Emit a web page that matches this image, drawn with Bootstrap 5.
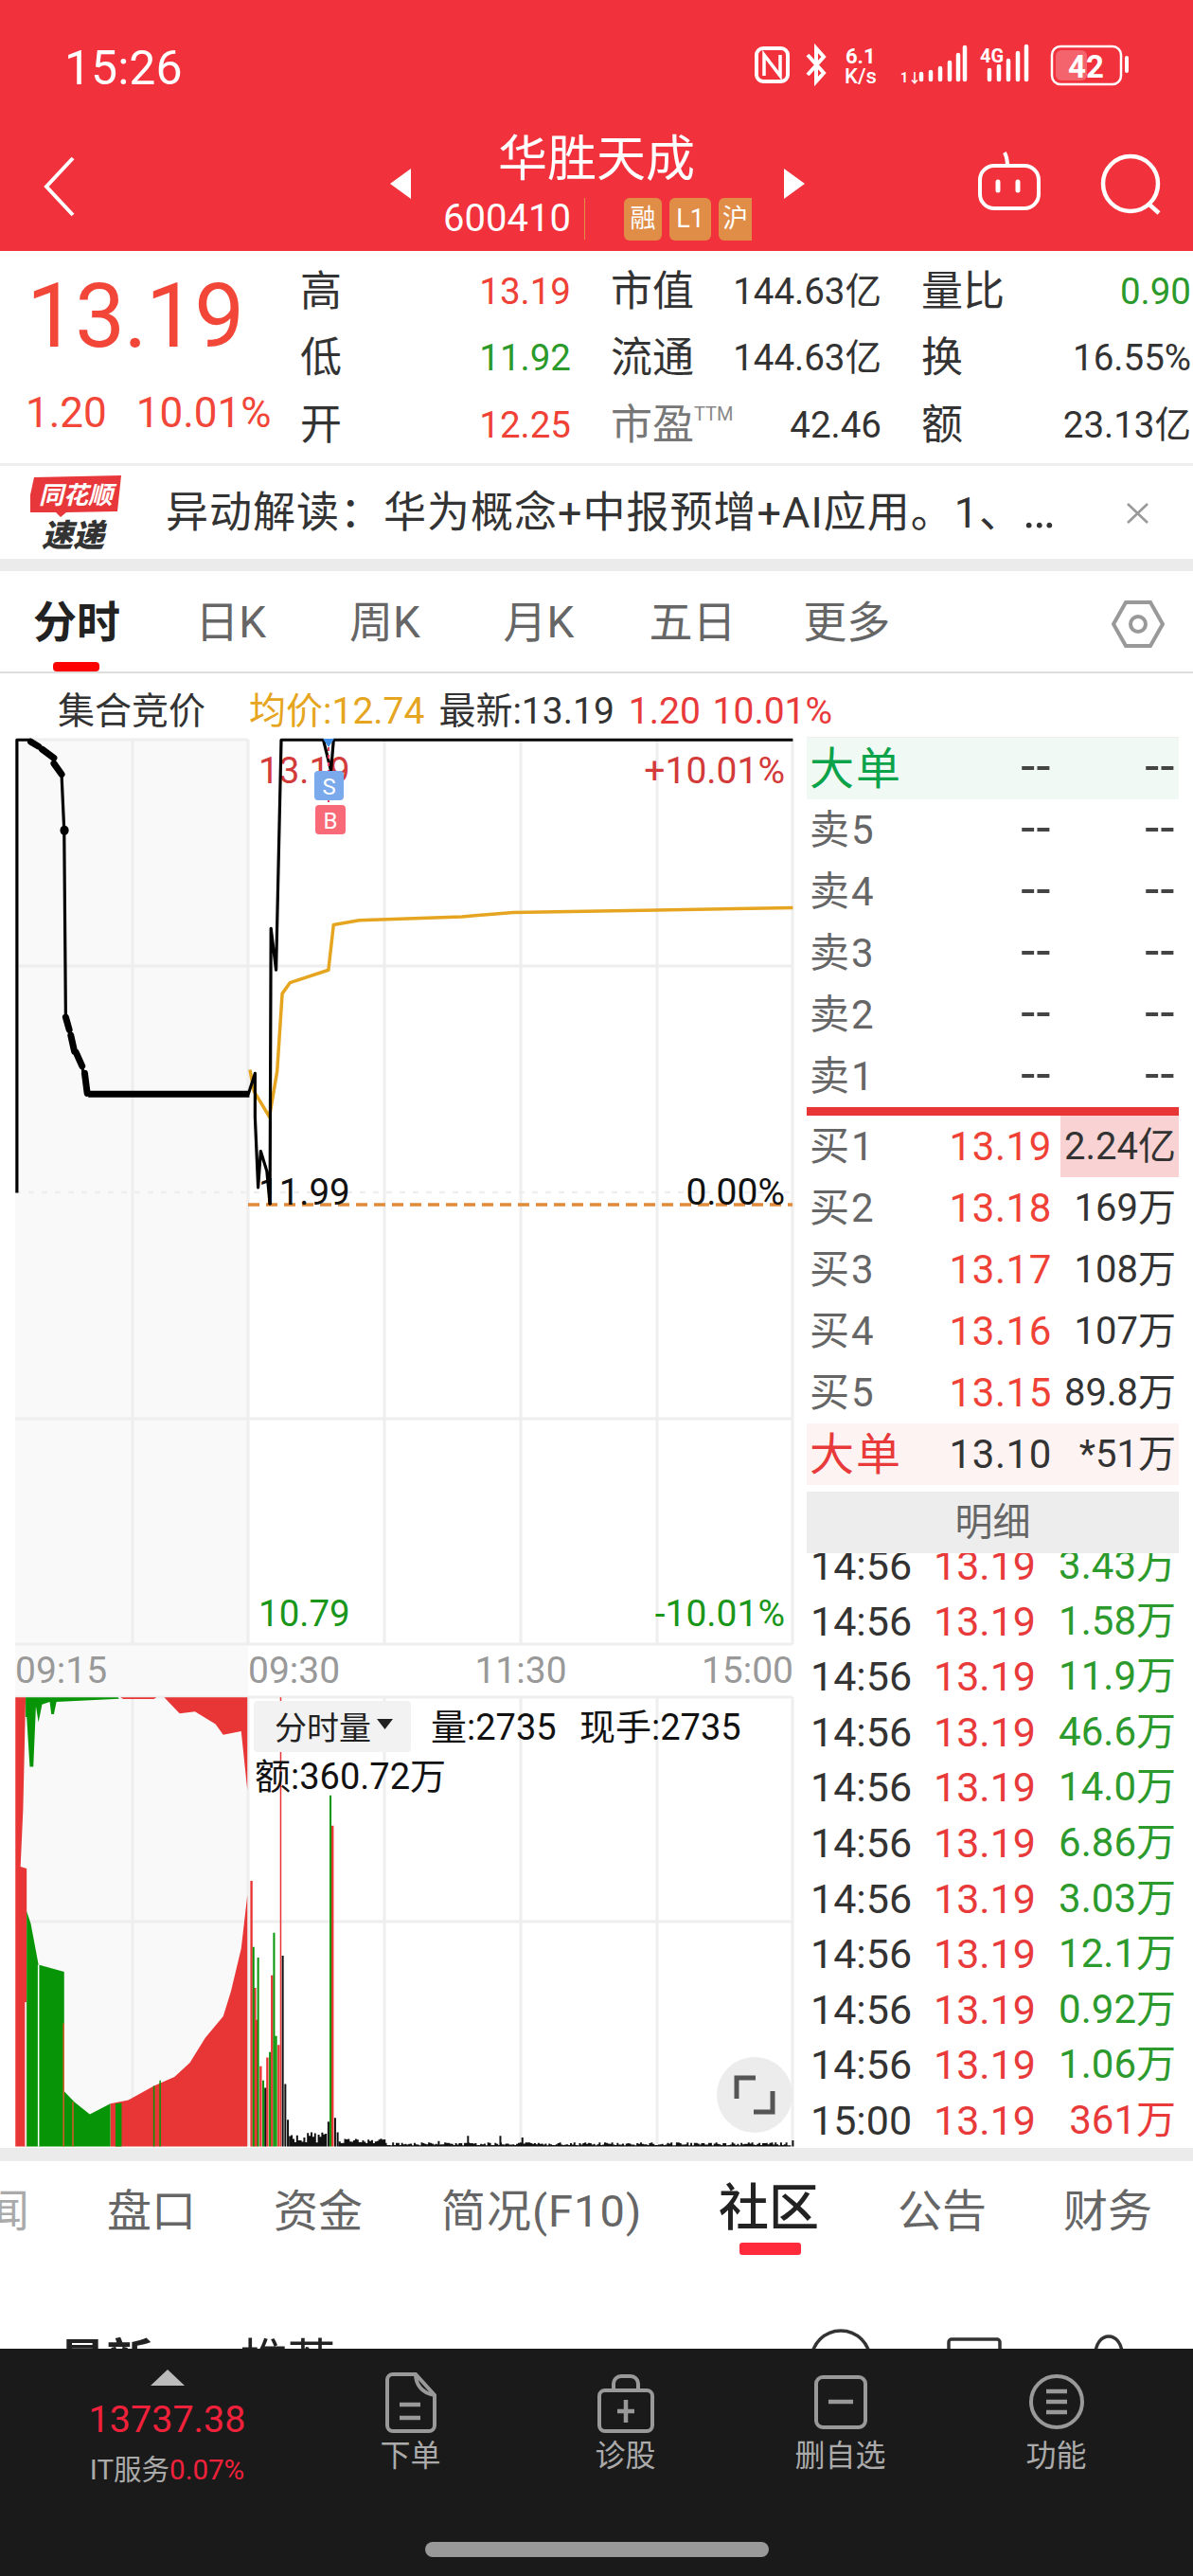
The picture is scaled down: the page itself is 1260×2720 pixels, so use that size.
<!doctype html>
<html lang="zh">
<head>
<meta charset="utf-8">
<title>华胜天成</title>
<link href="https://cdn.jsdelivr.net/npm/bootstrap@5.3.0/dist/css/bootstrap.min.css" rel="stylesheet">
<style>
html,body{margin:0;background:#fff}
body{width:1260px;height:2720px;overflow:hidden;font-family:Roboto,"Noto Sans CJK SC",sans-serif;color:#333;line-height:1.2}
svg text{font-family:Roboto,"Noto Sans CJK SC",sans-serif}
.hdr{height:265px;background:#f1313b;color:#fff}
.sbar{height:144px;padding:46px 66px 0 68px}
.clock{font-size:50px;line-height:52px}
.title-zone{width:440px}
.stock-name{font-size:52px;line-height:56px;margin-top:-3px}
.code-line{height:46px;margin-top:11px}
.code-num{font-size:40px;width:149px;line-height:46px}
.code-sep{width:1px;height:44px;background:#e08d47;margin-right:41px}
.tag-chip{height:45px;background:#e08d47;border-radius:6px;font-size:27px;color:#fff;margin-right:8px;display:flex;align-items:center;justify-content:center}
.quote-wrap{height:227px;border-bottom:3px solid #eee}
.price-col{width:317px;padding:35px 0 0 28px;color:#f24638}
.price-big{font-size:94px;line-height:68px;margin-left:0;letter-spacing:-1.5px}
.price-sub{font-size:44px;line-height:50px;margin-top:43px;white-space:nowrap;margin-left:-1px}
.stat-grid{display:grid;grid-template-columns:286px 286px 285px;column-gap:42px;grid-auto-rows:70.5px;padding-top:8px;width:943px}
.stat-cell{height:70px}
.stat-lab{font-size:44px}
.stat-val{font-size:38.500px}
.up{color:#ef4136}.down{color:#2b9a2b}.muted-lab{color:#777}
.ttm{font-size:20px;vertical-align:20px;color:#888}
.news-bar{height:98px;padding-left:32px}
.news-text{font-size:45px;margin-left:47px;width:960px;white-space:nowrap;letter-spacing:1px;color:#333}
.news-dots{letter-spacing:0;font-size:52px;line-height:1}
.grey-gap{height:13px;background:#ebebeb}
.period-bar{height:108px;border-bottom:2px solid #ddd;color:#666}
.period-item{width:163px;font-size:46px;text-align:center;line-height:108px;height:106px;margin-left:-.4px}
.period-on{font-weight:700;color:#222}
.period-mark{left:56px;bottom:0;width:49px;height:10px;background:#f00;border-radius:4px}
.legend-row{height:67px;font-size:39px;padding-left:61px;white-space:nowrap;padding-top:20px;line-height:40px}
.avg-txt{color:#e6a520;margin-left:46px}
.legend-nums{word-spacing:3px}
.book-col{width:393px;border-top:1px solid #eee}
.book-row{height:65px;font-size:42px;line-height:65px;padding:0 3px 0 3px;white-space:nowrap}
.book-lab{flex:1 1 auto;color:#666;letter-spacing:2px}
.book-price{text-align:right;letter-spacing:.6px}
.book-vol{width:131px;text-align:right;flex:none;font-size:40px}
.dash-cell{color:#444;font-size:54px;line-height:60px;letter-spacing:1.5px}
.big-green{background:#f1f9f5}
.big-red{background:#fdf3f3}
.big-lab{font-size:47px;letter-spacing:2px}
.sep-bar{height:9px;background:#e83535}
.pink-cell{background:#f9d3d4;margin-left:9px;margin-right:-3px;padding-right:3px;width:125px;flex:none;text-align:right}
.detail-head{height:65px;margin-top:7px;background:#ededed;text-align:center;font-size:40px;line-height:65px;color:#666}
.tick-box{height:628px;overflow:hidden}
.tick-list{margin-top:-16px}
.tick-row{height:58.6px;line-height:58.6px;font-size:43px;padding:0 3px 0 4px}
.tick-price{flex:1 1 auto;text-align:right}
.tick-vol{width:148px;text-align:right;flex:none;font-size:42px}
.lab-green{color:#2c9a2c}
.lab-red{color:#e83a3a}
.info-tabs{height:198px;overflow:hidden}
.info-row{height:106px;color:#666;font-size:47px;line-height:52px}
.info-item{top:27px}
.info-now{font-size:53px;color:#222;font-weight:500;left:759px;top:24px}
.info-mark{left:781px;top:86px;width:65px;height:13px;background:#ff2b3d;border-radius:3px}
.fade-ch{left:-16px;top:27px;opacity:.55}
.sub-row{height:92px;font-size:50px;color:#222;padding:76px 0 0 62px;line-height:60px}
.foot{height:240px;background:#1a1a1a;color:#aaa}
.idx-box{width:353px;top:0;left:0;text-align:center}
.idx-val{font-size:39.500px;color:#f0213a;line-height:44px;margin-top:14px}
.idx-sub{font-size:29.500px;line-height:36px;margin-top:13px}
.idx-red{color:#f0213a}
.act-item{width:227px;top:0}
.act-lab{font-size:32px;line-height:36px;color:#aaa}
.home-pill{width:363px;height:16px;background:#999;border-radius:8px;left:449px;top:204px}
</style>
</head>
<body>

<header class="hdr">
  <div class="sbar d-flex justify-content-between align-items-start">
    <div class="clock">15:26</div>
    <svg width="397" height="46" viewBox="798 50 397 46" fill="none" stroke="#fff">
      <rect x="800" y="55" width="33" height="35" rx="7" stroke-width="4"/>
      <path d="M808 84V62L825 84V62" stroke-width="3.500"/>
      <path d="M854 62l17 19-8 9V55l8 9-17 19" stroke-width="4"/>
      <text x="894" y="71" fill="#fff" stroke="none" font-size="22" font-weight="700">6.1</text>
      <text x="893" y="92" fill="#fff" stroke="none" font-size="22" font-weight="500">K/s</text>
      <text x="952" y="91" fill="#fff" stroke="none" font-size="14" font-weight="700">1↓</text>
      <path d="M974 82v6M984 80v8M994 76v12M1004 70v18M1013 62v26M1020 54v34" stroke-width="4.500" stroke-linecap="round"/>
      <text x="1036" y="70" fill="#fff" stroke="none" font-size="20" font-weight="700">4G</text>
      <path d="M1049 78v10M1059 74v14M1069 68v20M1079 60v28M1088 53v35" transform="translate(-3 0)" stroke-width="4.500" stroke-linecap="round"/>
      <rect x="1112" y="53" width="73" height="40" rx="9" stroke-width="2.500"/>
      <rect x="1116" y="57" width="33" height="32" rx="6" fill="#fff" fill-opacity=".25" stroke="none"/>
      <text x="1148" y="86" fill="#fff" stroke="none" font-size="33" font-weight="700" text-anchor="middle">42</text>
      <path d="M1191 65v14" stroke-width="4" stroke-linecap="round"/>
    </svg>
  </div>
  <nav class="d-flex position-relative" style="height:121px">
    <svg class="position-absolute" style="left:44px;top:20px" width="36" height="66" viewBox="0 0 36 66" fill="none" stroke="#fff" stroke-width="4"><path d="M33 3L5 33l28 30"/></svg>
    <svg class="position-absolute" style="left:412px;top:34px" width="22" height="32"><path d="M0 16L22 0v32z" fill="#fff"/></svg>
    <svg class="position-absolute" style="left:828px;top:34px" width="22" height="32"><path d="M22 16L0 0v32z" fill="#fff"/></svg>
    <div class="title-zone position-absolute" style="left:410px;top:0">
      <div class="stock-name text-center">华胜天成</div>
      <div class="code-line d-flex align-items-center" style="padding-left:58px">
        <div class="code-num">600410</div><div class="code-sep"></div>
        <div class="tag-chip" style="width:40px">融</div>
        <div class="tag-chip" style="width:44px">L1</div>
        <div class="tag-chip" style="width:35px;margin:0;border-radius:6px 0 0 6px">沪</div>
      </div>
    </div>
    <svg class="position-absolute" style="left:1030px;top:14px" width="72" height="66" viewBox="1030 158 72 66" fill="none" stroke="#fff" stroke-width="4">
      <rect x="1035" y="175" width="62" height="45" rx="15"/><path d="M1064 175c0-6-1-10-3-14"/>
      <path d="M1054 192v9M1075 192v9" stroke-width="5" stroke-linecap="round"/>
    </svg>
    <svg class="position-absolute" style="left:1160px;top:17px" width="70" height="66" viewBox="1160 161 70 66" fill="none" stroke="#fff" stroke-width="4.500">
      <ellipse cx="1194" cy="194" rx="29" ry="29"/><path d="M1214 216l10 9"/>
    </svg>
  </nav>
</header>

<section class="quote-wrap d-flex">
  <div class="price-col">
    <div class="price-big">13.19</div>
    <div class="price-sub"><span>1.20</span><span style="margin-left:31px">10.01%</span></div>
  </div>
  <div class="stat-grid">
    <div class="stat-cell d-flex justify-content-between align-items-center"><span class="stat-lab">高</span><span class="stat-val up">13.19</span></div>
    <div class="stat-cell d-flex justify-content-between align-items-center"><span class="stat-lab">市值</span><span class="stat-val">144.63亿</span></div>
    <div class="stat-cell d-flex justify-content-between align-items-center"><span class="stat-lab">量比</span><span class="stat-val down">0.90</span></div>
    <div class="stat-cell d-flex justify-content-between align-items-center"><span class="stat-lab">低</span><span class="stat-val down">11.92</span></div>
    <div class="stat-cell d-flex justify-content-between align-items-center"><span class="stat-lab">流通</span><span class="stat-val">144.63亿</span></div>
    <div class="stat-cell d-flex justify-content-between align-items-center"><span class="stat-lab">换</span><span class="stat-val">16.55%</span></div>
    <div class="stat-cell d-flex justify-content-between align-items-center"><span class="stat-lab">开</span><span class="stat-val up">12.25</span></div>
    <div class="stat-cell d-flex justify-content-between align-items-center"><span class="stat-lab muted-lab">市盈<span class="ttm">TTM</span></span><span class="stat-val">42.46</span></div>
    <div class="stat-cell d-flex justify-content-between align-items-center"><span class="stat-lab">额</span><span class="stat-val">23.13亿</span></div>
  </div>
</section>

<section class="news-bar d-flex align-items-center position-relative">
  <svg width="96" height="78" viewBox="32 503 96 78">
    <path d="M36 505l92-2-4 38-54 1-6 5-5-5-31 0z" fill="#e8373a"/>
    <text x="80" y="533" fill="#fff" font-size="26" font-weight="700" font-style="italic" text-anchor="middle">同花顺</text>
    <text x="77" y="578" fill="#333" font-size="33" font-weight="900" font-style="italic" text-anchor="middle">速递</text>
  </svg>
  <div class="news-text">异动解读：华为概念+中报预增+AI应用。1、<span class="news-dots">…</span></div>
  <svg class="position-absolute" style="left:1188px;top:36px" width="28" height="28" fill="none" stroke="#999" stroke-width="2.600"><path d="M3 4l21 20M24 4L3 24"/></svg>
</section>
<div class="grey-gap"></div>

<nav class="period-bar d-flex position-relative">
  <div class="period-item period-on">分时</div>
  <div class="period-item">日K</div>
  <div class="period-item">周K</div>
  <div class="period-item">月K</div>
  <div class="period-item">五日</div>
  <div class="period-item">更多</div>
  <span class="period-mark position-absolute"></span>
  <svg class="position-absolute" style="left:1174px;top:30px" width="56" height="52" viewBox="0 0 56 52" fill="none" stroke="#999" stroke-width="4"><path d="M15 3h26l13 23-13 23H15L2 26z"/><circle cx="28" cy="26" r="8"/></svg>
</nav>

<div class="legend-row">集合竞价<span class="avg-txt">均价:12.74</span><span style="margin-left:15px">最新:13.19</span><span class="lab-red legend-nums" style="margin-left:15px">1.20 10.01%</span></div>

<main class="d-flex" style="height:1490px">
  <svg width="852" height="1490" viewBox="0 778 852 1490">
    <rect x="16" y="781" width="246" height="955" fill="#f9f9f9"/>
    <rect x="16" y="1736" width="246" height="56" fill="#f9f9f9"/>
    <rect x="16" y="1792" width="246" height="474" fill="#f9f9f9"/>
    <g stroke="#eee" stroke-width="3" fill="none">
      <path d="M140 781V1736M262 781V1736M406 781V1736M550 781V1736M694 781V1736M837 781V1736M16 1020H837M16 1498H837M16 1736H837M16 781H262"/>
      <path d="M140 1792V2266M262 1792V2266M406 1792V2266M550 1792V2266M694 1792V2266M837 1792V2266M16 2029H837M16 1792H837"/>
      <path d="M16 1259H837" stroke-dasharray="6 8" stroke-width="2.500"/>
    </g>
    <path d="M262 1272H837" stroke="#e08a3a" stroke-width="3.500" stroke-dasharray="12 7"/>
    <text x="273" y="827" fill="#d33a3a" font-size="38.500">13.19</text>
    <text x="829" y="827" fill="#d33a3a" font-size="39" text-anchor="end">+10.01%</text>
    <text x="273" y="1272" fill="#111" font-size="38.500">11.99</text>
    <text x="829" y="1272" fill="#111" font-size="39" text-anchor="end">0.00%</text>
    <text x="273" y="1717" fill="#1a961a" font-size="38.500">10.79</text>
    <text x="829" y="1717" fill="#1a961a" font-size="39" text-anchor="end">-10.01%</text>
    <text x="16" y="1777" fill="#999" font-size="39">09:15</text>
    <text x="262" y="1777" fill="#999" font-size="39">09:30</text>
    <text x="550" y="1777" fill="#999" font-size="39" text-anchor="middle">11:30</text>
    <text x="838" y="1777" fill="#999" font-size="39" text-anchor="end">15:00</text>

    <g transform="translate(0 720) scale(.542 .3827)" fill="none" stroke-linejoin="round">
      <polyline vector-effect="non-scaling-stroke" stroke="#e6a520" stroke-width="3.500" points="487,1070 495,1130 525,1200 540,1075 550,860 565,830 640,795 650,670 700,658 900,648 1000,636 1280,630 1545,623"/>
      <polyline vector-effect="non-scaling-stroke" stroke="#000" stroke-width="3.200" points="33,1410 33,160 60,160 75,175 100,205 120,255 125,410 128,920 135,960 145,1020 160,1060 170,1135 484,1137 497,1080 497,1200 503,1395 508,1295 520,1350 526,1440 528,680 538,795 548,160 630,160 645,245 650,160 1545,160"/>
      <path vector-effect="non-scaling-stroke" stroke="#000" stroke-width="7" d="M172 1137H486"/>
      <path vector-effect="non-scaling-stroke" stroke="#000" stroke-width="7" stroke-linecap="round" d="M60 165L75 178M82 186L105 210M105 225L120 255M128 925L135 960M138 975L145 1020M148 1022L160 1060M165 1080L170 1135"/>
      <path vector-effect="non-scaling-stroke" stroke="#000" stroke-width="9" stroke-linecap="round" d="M125.500 408v3"/>
    </g>
    <path d="M347 781v66" stroke="#e0405a" stroke-width="2" stroke-dasharray="4 4"/>
    <path d="M341 780h12l-6 9z" fill="#3f8fe6"/>
    <g>
      <rect x="332" y="814" width="31" height="31" rx="4" fill="#7aa9ec"/>
      <text x="347.500" y="839" fill="#fff" font-size="24" text-anchor="middle">S</text>
      <rect x="333" y="850" width="32" height="31" rx="4" fill="#f86a78"/>
      <text x="349" y="875" fill="#fff" font-size="24" text-anchor="middle">B</text>
    </g>

    <g transform="translate(0 1700) scale(.542 .3764)">
      <polygon fill="#e83535" points="482,800 470,950 450,1070 435,1140 400,1200 370,1270 340,1310 300,1335 250,1375 215,1385 215,1505 482,1505"/>
      <polygon fill="#e83535" points="320,245 482,245 482,505 470,340 435,350 420,320 380,285 350,290"/>
      <polygon fill="#e83535" points="30,245 50,245 45,560 40,720 52,725 52,1505 30,1505"/>
      <polygon fill="#079507" points="52,845 60,880 75,995 125,1015 125,1350 145,1380 175,1415 215,1385 215,1505 52,1505"/>
      <polygon fill="#079507" points="50,245 230,245 232,249 110,258 105,292 100,292 97,258 82,265 75,315 70,270 65,440 58,440 52,300 50,300"/>
      <polygon fill="#079507" points="225,1385 237,1383 237,1505 225,1505"/>
      <polygon fill="#e83535" points="235,245 305,245 300,250 240,250"/>
      <g fill="none">
        <path vector-effect="non-scaling-stroke" stroke-width="1.500" stroke="#fff" d="M75 995V1505M50 1100V1505"/>
        <path vector-effect="non-scaling-stroke" stroke-width="1.500" stroke="#d85a2a" d="M124 1160V1505M142 1380V1505"/>
        <path vector-effect="non-scaling-stroke" stroke-width="1.500" stroke="#079507" d="M300 1335V1505M312 1320V1505"/>
        <path vector-effect="non-scaling-stroke" stroke-width="2.400" stroke="#e83535" d="M490 760V1505M497 1060V1505M500 1150V1505M508 1280V1505M521 1255V1505M530 1025V1505M543 1220V1505M648 605V1505"/>
        <path vector-effect="non-scaling-stroke" stroke-width="1.500" stroke="#e83535" d="M547 245V1505"/>
        <path vector-effect="non-scaling-stroke" stroke-width="2" stroke="#079507" d="M494 945V1505M503 975V1505M513 1320V1505M526 1240V1505M534 905V1505M538 1195V1505M644 520V1505"/>
        <path id="tinyBars" vector-effect="non-scaling-stroke" stroke-width="2" stroke="#111" d="M517 1340V1505M551 970V1505M556 1330V1505M561 1430V1505M640 1435V1505M653 1425V1505M658 1465V1505M855 1490V1505M912 1475V1505M975 1475V1505M1018 1480V1505M1545 1488V1505"/>
      </g>
    </g>
    <rect x="268" y="1796" width="166" height="54" rx="4" fill="#f2f2f2"/>
    <text x="290" y="1837" fill="#222" font-size="34">分时量</text>
    <path d="M398 1815h17l-8.500 11z" fill="#222"/>
    <text x="455" y="1837" fill="#111" font-size="38">量:2735</text>
    <text x="612" y="1837" fill="#111" font-size="38">现手:2735</text>
    <text x="269" y="1889" fill="#111" font-size="38">额:360.72万</text>
    <circle cx="797" cy="2212" r="40" fill="#ececec"/>
    <path d="M778 2216v-22h20M816 2208v22h-20" fill="none" stroke="#555" stroke-width="5"/>
  </svg>

  <aside class="book-col">
    <div class="book-row big-green d-flex"><span class="book-lab big-lab" style="color:#0aa34a">大单</span><span class="book-price dash-cell">--</span><span class="book-vol dash-cell">--</span></div>
    <div class="book-row d-flex"><span class="book-lab">卖5</span><span class="book-price dash-cell">--</span><span class="book-vol dash-cell">--</span></div>
    <div class="book-row d-flex"><span class="book-lab">卖4</span><span class="book-price dash-cell">--</span><span class="book-vol dash-cell">--</span></div>
    <div class="book-row d-flex"><span class="book-lab">卖3</span><span class="book-price dash-cell">--</span><span class="book-vol dash-cell">--</span></div>
    <div class="book-row d-flex"><span class="book-lab">卖2</span><span class="book-price dash-cell">--</span><span class="book-vol dash-cell">--</span></div>
    <div class="book-row d-flex"><span class="book-lab">卖1</span><span class="book-price dash-cell">--</span><span class="book-vol dash-cell">--</span></div>
    <div class="sep-bar"></div>
    <div class="book-row d-flex"><span class="book-lab">买1</span><span class="book-price up">13.19</span><span class="book-vol pink-cell">2.24亿</span></div>
    <div class="book-row d-flex"><span class="book-lab">买2</span><span class="book-price up">13.18</span><span class="book-vol">169万</span></div>
    <div class="book-row d-flex"><span class="book-lab">买3</span><span class="book-price up">13.17</span><span class="book-vol">108万</span></div>
    <div class="book-row d-flex"><span class="book-lab">买4</span><span class="book-price up">13.16</span><span class="book-vol">107万</span></div>
    <div class="book-row d-flex"><span class="book-lab">买5</span><span class="book-price up">13.15</span><span class="book-vol">89.8万</span></div>
    <div class="book-row big-red d-flex"><span class="book-lab big-lab lab-red">大单</span><span class="book-price">13.10</span><span class="book-vol">*51万</span></div>
    <div class="detail-head">明细</div>
    <div class="tick-box">
      <div class="tick-list">
        <div class="tick-row d-flex"><span>14:56</span><span class="tick-price lab-red">13.19</span><span class="tick-vol lab-green">3.43万</span></div>
        <div class="tick-row d-flex"><span>14:56</span><span class="tick-price lab-red">13.19</span><span class="tick-vol lab-green">1.58万</span></div>
        <div class="tick-row d-flex"><span>14:56</span><span class="tick-price lab-red">13.19</span><span class="tick-vol lab-green">11.9万</span></div>
        <div class="tick-row d-flex"><span>14:56</span><span class="tick-price lab-red">13.19</span><span class="tick-vol lab-green">46.6万</span></div>
        <div class="tick-row d-flex"><span>14:56</span><span class="tick-price lab-red">13.19</span><span class="tick-vol lab-green">14.0万</span></div>
        <div class="tick-row d-flex"><span>14:56</span><span class="tick-price lab-red">13.19</span><span class="tick-vol lab-green">6.86万</span></div>
        <div class="tick-row d-flex"><span>14:56</span><span class="tick-price lab-red">13.19</span><span class="tick-vol lab-green">3.03万</span></div>
        <div class="tick-row d-flex"><span>14:56</span><span class="tick-price lab-red">13.19</span><span class="tick-vol lab-green">12.1万</span></div>
        <div class="tick-row d-flex"><span>14:56</span><span class="tick-price lab-red">13.19</span><span class="tick-vol lab-green">0.92万</span></div>
        <div class="tick-row d-flex"><span>14:56</span><span class="tick-price lab-red">13.19</span><span class="tick-vol lab-green">1.06万</span></div>
        <div class="tick-row d-flex"><span>15:00</span><span class="tick-price lab-red">13.19</span><span class="tick-vol lab-red">361万</span></div>
      </div>
    </div>
  </aside>
</main>
<div class="grey-gap" style="height:14px"></div>

<section class="info-tabs position-relative">
  <div class="info-row position-relative">
    <span class="fade-ch position-absolute">闻</span>
    <span class="info-item position-absolute" style="left:113px">盘口</span>
    <span class="info-item position-absolute" style="left:289px">资金</span>
    <span class="info-item position-absolute" style="left:466px;letter-spacing:1px">简况(F10)</span>
    <span class="info-now position-absolute">社区</span>
    <span class="info-item position-absolute" style="left:948px">公告</span>
    <span class="info-item position-absolute" style="left:1123px">财务</span>
    <span class="info-mark position-absolute"></span>
  </div>
  <div class="sub-row position-relative">
    <span class="fw-bold">最新</span><span style="margin-left:92px">推荐</span>
    <svg class="position-absolute" style="left:850px;top:68px" width="350" height="40" viewBox="850 2456 350 40" fill="none" stroke="#333" stroke-width="3.500">
      <circle cx="888" cy="2492" r="31"/><rect x="1002" y="2470" width="54" height="40" rx="3"/><ellipse cx="1171" cy="2485" rx="14" ry="18"/>
    </svg>
  </div>
</section>

<footer class="foot position-relative">
  <div class="idx-box position-absolute">
    <svg width="36" height="17" style="display:block;margin:22px auto 0"><path d="M18 0l18 17H0z" fill="#bbb"/></svg>
    <div class="idx-val">13737.38</div>
    <div class="idx-sub">IT服务<span class="idx-red">0.07%</span></div>
  </div>
  <div class="act-item position-absolute text-center" style="left:320px">
    <svg width="56" height="66" viewBox="0 0 56 66" fill="none" stroke="#999" stroke-width="4" style="display:block;margin:24px auto 0"><path d="M9 3h24l20 22v32a6 6 0 0 1-6 6H9a6 6 0 0 1-6-6V9a6 6 0 0 1 6-6zM33 3c0 10 6 20 20 22"/><path d="M16 35h22M16 49h22" stroke-width="4.500"/></svg>
    <div class="act-lab" style="margin-top:5px">下单</div>
  </div>
  <div class="act-item position-absolute text-center" style="left:547px">
    <svg width="60" height="62" viewBox="0 0 60 62" fill="none" stroke="#999" stroke-width="4" style="display:block;margin:27px auto 0"><path d="M17 17V10a8 8 0 0 1 8-8h10a8 8 0 0 1 8 8v7"/><rect x="2" y="17" width="56" height="43" rx="6"/><path d="M30 27v24M21 39h18" stroke-width="4.500"/></svg>
    <div class="act-lab" style="margin-top:6px">诊股</div>
  </div>
  <div class="act-item position-absolute text-center" style="left:774px">
    <svg width="56" height="57" viewBox="0 0 56 57" fill="none" stroke="#999" stroke-width="4" style="display:block;margin:28px auto 0"><rect x="2" y="2" width="52" height="53" rx="7"/><path d="M15 28h26" stroke-width="4.500"/></svg>
    <div class="act-lab" style="margin-top:10px">删自选</div>
  </div>
  <div class="act-item position-absolute text-center" style="left:1002px">
    <svg width="60" height="60" viewBox="0 0 60 60" fill="none" stroke="#999" stroke-width="4" style="display:block;margin:26px auto 0"><circle cx="30" cy="30" r="27"/><path d="M19 19h22M19 30h22M19 41h22" stroke-width="4.500"/></svg>
    <div class="act-lab" style="margin-top:9px">功能</div>
  </div>
  <div class="home-pill position-absolute"></div>
</footer>

<script>
(function(){
  var el=document.getElementById('tinyBars'),d=el.getAttribute('d'),s=17;
  function r(){s=(s*137+59)%1009;return s/1009;}
  for(var x=565;x<636;x+=3.5){d+='M'+x+' '+(1465+r()*30|0)+'V1505';}
  for(var x2=662;x2<752;x2+=3.5){d+='M'+x2+' '+(1482+r()*16|0)+'V1505';}
  for(var x3=752;x3<1540;x3+=3.5){d+='M'+x3+' '+(1494+r()*9|0)+'V1505';}
  el.setAttribute('d',d);
})();
</script>
<script src="https://cdn.jsdelivr.net/npm/bootstrap@5.3.0/dist/js/bootstrap.bundle.min.js"></script>
</body>
</html>
